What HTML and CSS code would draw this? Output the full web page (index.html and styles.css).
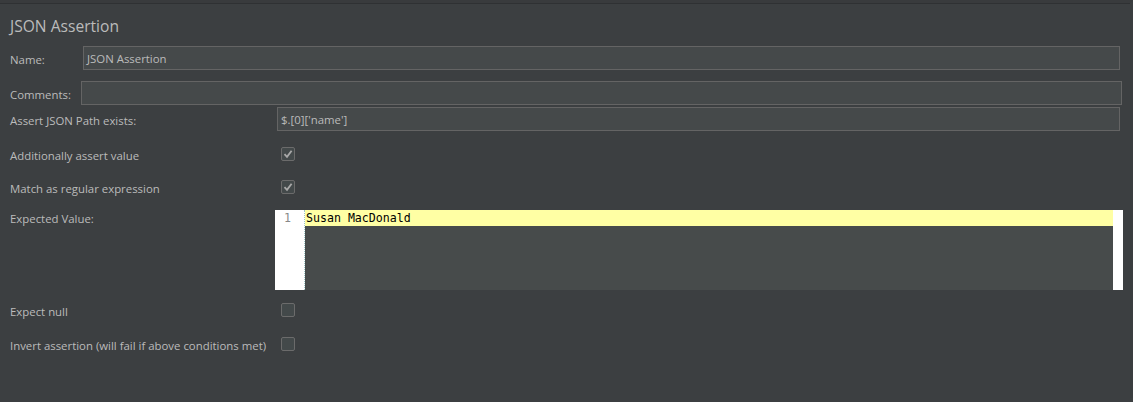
FILE: index.html
```html
<!DOCTYPE html>
<html>
<head>
<meta charset="utf-8">
<link rel="stylesheet" href="styles.css">
</head>
<body>
<div class="page">
  <div class="title">JSON Assertion</div>
  <div class="row row-name">
    <label class="lbl lbl-name">Name:</label>
    <div class="input">JSON Assertion</div>
  </div>
  <div class="row row-comments">
    <label class="lbl lbl-comments">Comments:</label>
    <div class="input"></div>
  </div>
  <div class="row row-path">
    <label class="lbl lbl-wide">Assert JSON Path exists:</label>
    <div class="input">$.[0]['name']</div>
  </div>
  <div class="row row-check r1">
    <label class="lbl lbl-wide">Additionally assert value</label>
    <span class="cb checked"><svg viewBox="0 0 14 14" width="14" height="14"><path d="M3.5 7.2 L6 9.8 L10.6 3.8" fill="none" stroke="#a9a9a9" stroke-width="1.8"/></svg></span>
  </div>
  <div class="row row-check r2">
    <label class="lbl lbl-wide">Match as regular expression</label>
    <span class="cb checked"><svg viewBox="0 0 14 14" width="14" height="14"><path d="M3.5 7.2 L6 9.8 L10.6 3.8" fill="none" stroke="#a9a9a9" stroke-width="1.8"/></svg></span>
  </div>
  <div class="row row-editor">
    <label class="lbl lbl-wide lbl-top">Expected Value:</label>
    <div class="editor">
      <div class="gutter"><div class="ln">1</div></div>
      <div class="code"><div class="line cur">Susan MacDonald</div></div>
      <div class="vbar"></div>
    </div>
  </div>
  <div class="row row-check r3">
    <label class="lbl lbl-wide">Expect null</label>
    <span class="cb"></span>
  </div>
  <div class="row row-check r4">
    <label class="lbl lbl-wide">Invert assertion (will fail if above conditions met)</label>
    <span class="cb"></span>
  </div>
</div>
</body>
</html>
```
FILE: styles.css
```css
html, body {
  margin: 0;
  padding: 0;
  background: #3c3f41;
  height: 100%;
}
body {
  font-family: "Open Sans", "Noto Sans", sans-serif;
  font-size: 11.4px;
  color: #bbbbbb;
}
.page {
  min-height: 398px;
  border-top: 3px solid #393b3d;
  box-shadow: inset 0 1px 0 #2f3133;
  padding-left: 10px;
  border-right: 3px solid #3a3d3f;
  box-sizing: border-box;
  overflow: hidden;
}
.title {
  font-size: 15.6px;
  line-height: 22px;
  padding-top: 12px;
  color: #bbbbbb;
}
.row {
  display: flex;
  align-items: center;
}
.lbl {
  flex: none;
  white-space: nowrap;
}
.lbl-name { width: 73px; }
.lbl-comments { width: 71px; }
.lbl-wide { width: 265px; }
.lbl-top { align-self: flex-start; padding-top: 1px; line-height: 16px; }
.input {
  flex: 1;
  height: 24px;
  box-sizing: border-box;
  background: #45494a;
  border: 1px solid #646464;
  padding: 1px 3px 0;
  line-height: 22px;
  color: #bbbbbb;
}
.row-name { margin-top: 9px; margin-right: 10px; }
.row-name .lbl, .row-comments .lbl, .row-path .lbl { padding-top: 2px; }
.row-comments { margin-top: 11px; margin-right: 8px; }
.row-path { margin-top: 2px; margin-right: 10px; }
.row-path .input { margin-left: 2px; }
.cb {
  width: 14px;
  height: 14px;
  box-sizing: border-box;
  border: 1px solid #6b6b6b;
  border-radius: 2px;
  background: #43494a;
  margin-left: 6px;
  display: block;
  position: relative;
}
.cb svg { position: absolute; left: -1px; top: -1px; }
.row-check { height: 14px; }
.row-check .lbl { line-height: 14px; padding-top: 3px; }
.r1 { margin-top: 16px; }
.r2 { margin-top: 19px; }
.row-editor { margin-top: 16px; margin-right: 7px; align-items: stretch; }
.r3 { margin-top: 13px; }
.r4 { margin-top: 20px; }
.editor {
  flex: 1;
  height: 80px;
  display: flex;
}
.gutter {
  width: 29px;
  background: #ffffff;
  border-right: 1px dotted #9cc6c6;
  font-family: "DejaVu Sans Mono", "Liberation Mono", monospace;
  font-size: 11.6px;
  color: #888888;
}
.ln {
  line-height: 16px;
  text-align: right;
  padding-right: 13px;
}
.code {
  flex: 1;
  background: #474b4b;
  font-family: "DejaVu Sans Mono", "Liberation Mono", monospace;
  font-size: 11.6px;
  color: #000000;
}
.line {
  line-height: 16px;
  height: 16px;
  padding-left: 1px;
}
.cur { background: #ffffa4; }
.vbar {
  width: 10px;
  background: #ffffff;
}
```
